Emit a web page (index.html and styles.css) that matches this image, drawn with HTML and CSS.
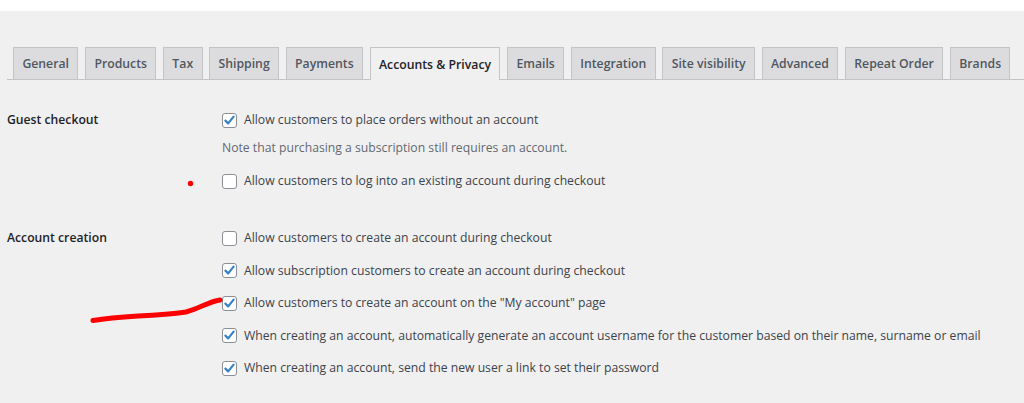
FILE: index.html
```html
<!DOCTYPE html>
<html>
<head>
<meta charset="utf-8">
<link rel="stylesheet" href="styles.css">
</head>
<body>
<div class="page">
  <nav class="tabs">
    <span class="tab">General</span>
    <span class="tab">Products</span>
    <span class="tab">Tax</span>
    <span class="tab">Shipping</span>
    <span class="tab">Payments</span>
    <span class="tab active">Accounts &amp; Privacy</span>
    <span class="tab">Emails</span>
    <span class="tab">Integration</span>
    <span class="tab">Site visibility</span>
    <span class="tab">Advanced</span>
    <span class="tab">Repeat Order</span>
    <span class="tab">Brands</span>
  </nav>

  <section class="row first">
    <div class="label">Guest checkout</div>
    <div class="fields">
      <div class="opt"><span class="cb"><svg class="tick" viewBox="0 0 15 15"><path d="M3.4 7.6 L6.2 10.4 L11.6 3.6"/></svg></span>Allow customers to place orders without an account</div>
      <div class="note">Note that purchasing a subscription still requires an account.</div>
      <div class="opt"><span class="cb"></span>Allow customers to log into an existing account during checkout</div>
    </div>
  </section>

  <section class="row second">
    <div class="label">Account creation</div>
    <div class="fields">
      <div class="opt"><span class="cb"></span>Allow customers to create an account during checkout</div>
      <div class="opt"><span class="cb"><svg class="tick" viewBox="0 0 15 15"><path d="M3.4 7.6 L6.2 10.4 L11.6 3.6"/></svg></span>Allow subscription customers to create an account during checkout</div>
      <div class="opt"><span class="cb"><svg class="tick" viewBox="0 0 15 15"><path d="M3.4 7.6 L6.2 10.4 L11.6 3.6"/></svg></span>Allow customers to create an account on the "My account" page</div>
      <div class="opt"><span class="cb"><svg class="tick" viewBox="0 0 15 15"><path d="M3.4 7.6 L6.2 10.4 L11.6 3.6"/></svg></span>When creating an account, automatically generate an account username for the customer based on their name, surname or email</div>
      <div class="opt"><span class="cb"><svg class="tick" viewBox="0 0 15 15"><path d="M3.4 7.6 L6.2 10.4 L11.6 3.6"/></svg></span>When creating an account, send the new user a link to set their password</div>
    </div>
  </section>

  <svg class="marks" width="1024" height="403" viewBox="0 0 1024 403">
    <circle cx="190.5" cy="183.5" r="2.7" fill="#ff0000"/>
    <path d="M93 320.5 C108 318 122 317 138 316 C158 315 172 314 186 312 C200 308 208 302 220 300" fill="none" stroke="#ff0000" stroke-width="5" stroke-linecap="round"/>
  </svg>
</div>
</body>
</html>
```

FILE: styles.css
```css
html, body {
  margin: 0;
  padding: 0;
  background: #ffffff;
}
body {
  font-family: "Open Sans", "Noto Sans", sans-serif;
  font-size: 12.2px;
  color: #3c434a;
}
.page {
  position: relative;
  margin-top: 11px;
  background: #f0f0f1;
  height: 392px;
}
.tabs {
  display: flex;
  gap: 6.6px;
  margin-left: 7px;
  padding: 36px 0 0 6px;
  border-bottom: 1px solid #c3c4c7;
  height: 32px;
  box-sizing: content-box;
}
.tab {
  display: flex;
  align-items: center;
  box-sizing: border-box;
  height: 32px;
  padding: 0 8.4px;
  background: #dcdcde;
  border: 1px solid #c3c4c7;
  border-bottom: none;
  font-weight: 600;
  font-size: 12.25px;
  color: #50575e;
  white-space: nowrap;
}
.tab.active {
  background: #f0f0f1;
  color: #1d2327;
  height: 33px;
  margin-bottom: -1px;
}
.row {
  display: flex;
}
.row.first { margin-top: 31px; }
.row.second { margin-top: 39px; }
.label {
  width: 222px;
  padding-left: 7px;
  box-sizing: border-box;
  font-weight: 600;
  color: #1d2327;
  line-height: 18px;
  flex: none;
}
.fields {
  display: flex;
  flex-direction: column;
}
.opt {
  display: flex;
  align-items: center;
  height: 18px;
  line-height: 18px;
  white-space: nowrap;
}
.fields .opt + .opt { margin-top: 14.5px; }
.note {
  color: #646970;
  line-height: 18px;
  margin-top: 10px;
  margin-bottom: 15px;
}
.cb {
  flex: none;
  width: 15px;
  height: 15px;
  box-sizing: border-box;
  border: 1px solid #8c8f94;
  border-radius: 3px;
  background: #fff;
  margin-right: 7px;
  position: relative;
}
.tick {
  position: absolute;
  left: -1px;
  top: -1px;
  width: 15px;
  height: 15px;
  fill: none;
  stroke: #3582c4;
  stroke-width: 2.2;
  stroke-linecap: round;
  stroke-linejoin: round;
}
.marks {
  position: absolute;
  left: 0;
  top: -11px;
  pointer-events: none;
}
```
